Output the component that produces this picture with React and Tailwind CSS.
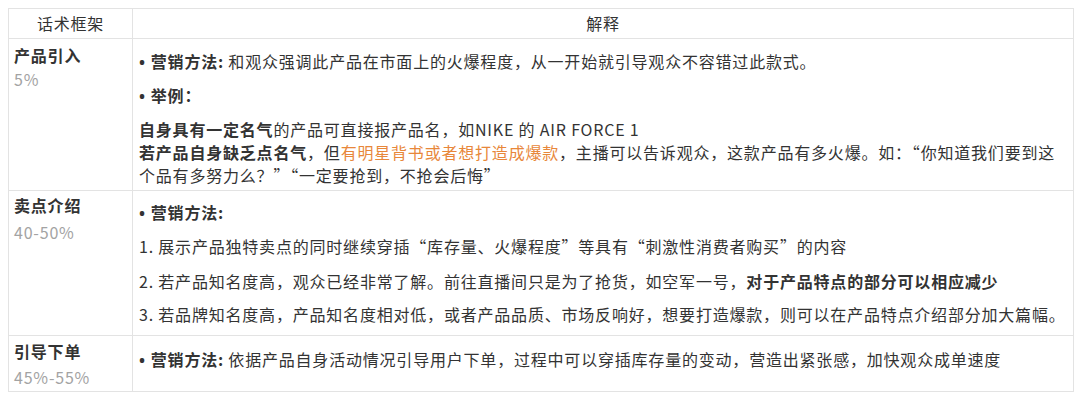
const Bullet = () => <span className="font-['Open_Sans'] font-bold">•&nbsp;</span>;

const rows = [
  {
    name: "产品引入",
    share: "5%",
    pad: "pt-[11px] pb-[3px]",
    labelPad: "pt-[5px]",
    shareGap: "mt-[1px]",
    body: (
      <>
        <p className="mb-[10px]">
          <Bullet />
          <span className="font-bold">营销方法:</span> 和观众强调此产品在市面上的火爆程度，从一开始就引导观众不容错过此款式。
        </p>
        <p className="mb-[10px] font-bold">
          <Bullet />
          举例：
        </p>
        <p>
          <span className="font-bold">自身具有一定名气</span>的产品可直接报产品名，如NIKE 的 AIR FORCE 1
          <br />
          <span className="font-bold">若产品自身缺乏点名气</span>，但
          <span className="text-[#e8873a]">有明星背书或者想打造成爆款</span>
          ，主播可以告诉观众，这款产品有多火爆。如：“你知道我们要到这个品有多努力么？”“一定要抢到，不抢会后悔”
        </p>
      </>
    ),
  },
  {
    name: "卖点介绍",
    share: "40-50%",
    pad: "pt-[10px] pb-[9px]",
    labelPad: "pt-[3px]",
    shareGap: "mt-[4px]",
    body: (
      <>
        <p className="mb-[10px] font-bold">
          <Bullet />
          营销方法:
        </p>
        <p className="mb-[12px]">1. 展示产品独特卖点的同时继续穿插“库存量、火爆程度”等具有“刺激性消费者购买”的内容</p>
        <p className="mb-[10px]">
          2. 若产品知名度高，观众已经非常了解。前往直播间只是为了抢货，如空军一号，
          <span className="font-bold">对于产品特点的部分可以相应减少</span>
        </p>
        <p>3. 若品牌知名度高，产品知名度相对低，或者产品品质、市场反响好，想要打造爆款，则可以在产品特点介绍部分加大篇幅。</p>
      </>
    ),
  },
  {
    name: "引导下单",
    share: "45%-55%",
    pad: "pt-[12px] pb-[5px]",
    labelPad: "pt-[4px]",
    shareGap: "mt-[3px]",
    body: (
      <p>
        <Bullet />
        <span className="font-bold">营销方法:</span> 依据产品自身活动情况引导用户下单，过程中可以穿插库存量的变动，营造出紧张感，加快观众成单速度
      </p>
    ),
  },
];

export default function App() {
  return (
    <div className="h-[397px] w-[1080px] bg-white pl-[8px] pt-[8px] font-['Noto_Sans_CJK_SC','Open_Sans',sans-serif] text-[16px] leading-[23px] tracking-[0.8px] text-[#333]">
      <table className="w-[1066px] border-collapse">
        <thead>
          <tr className="h-[30px]">
            <th className="w-[124px] border border-[#e3e3e3] text-center font-normal">话术框架</th>
            <th className="border border-[#e3e3e3] text-center font-normal">解释</th>
          </tr>
        </thead>
        <tbody>
          {rows.map((row) => (
            <tr key={row.name}>
              <td className={`border border-[#e3e3e3] px-[5px] pb-[2px] align-top ${row.labelPad}`}>
                <div className="font-semibold">{row.name}</div>
                <div className={`text-[#a3a3a3] ${row.shareGap}`}>{row.share}</div>
              </td>
              <td className={`border border-[#e3e3e3] pl-[6px] pr-[6px] align-top ${row.pad}`}>
                {row.body}
              </td>
            </tr>
          ))}
        </tbody>
      </table>
    </div>
  );
}
